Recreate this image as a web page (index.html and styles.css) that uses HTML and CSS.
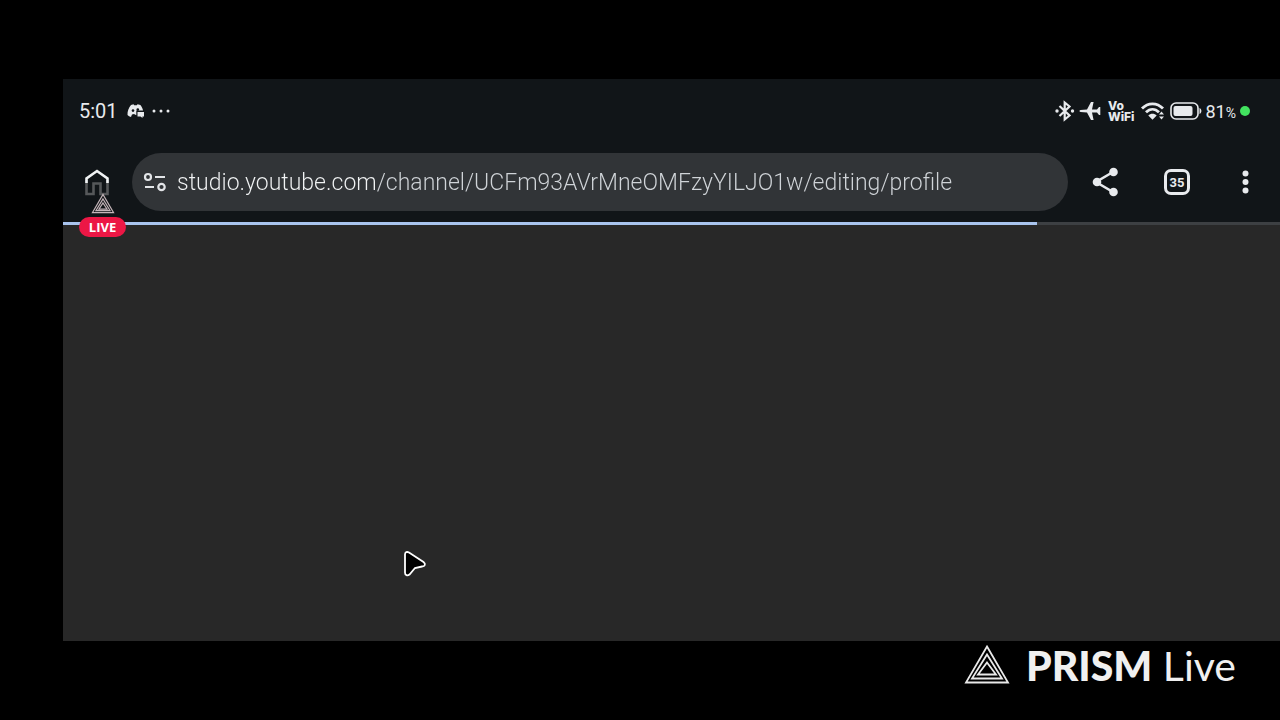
FILE: index.html
```
<!DOCTYPE html>
<html lang="en">
<head>
    <meta charset="UTF-8">
    <meta name="viewport" content="width=device-width, initial-scale=1.0">
    <title>PRISM Live</title>
    <link rel="stylesheet" href="styles.css">
</head>
<body>
    <main class="screen">
        <div class="status-bar">
            <span class="clock">5:01</span>
            <svg class="discord" width="18" height="16" viewBox="0 0 18 16" fill="#e8eaed">
                <path d="M4 2 6.500 1.200 7.200 2.200h2.600l.8-1 2.800.8c1.600 2 2.400 4 2.600 5.500H9.300v4.700L7 11l-2 .6L4 14C2.500 13.600 1.400 12.900.5 12 .3 8.500 1.600 4.600 4 2z"/>
                <path d="M10.500 9h6.500v4.500h-1.500V15l-2-1.500h-3z"/>
                <circle cx="6" cy="7.600" r="1.300" fill="#111518"/>
                <circle cx="10.800" cy="6.600" r="1.300" fill="#111518"/>
            </svg>
            <svg class="more" width="18" height="4" viewBox="0 0 18 4" fill="#e8eaed">
                <circle cx="2" cy="2" r="1.500"/><circle cx="9" cy="2" r="1.500"/><circle cx="16" cy="2" r="1.500"/>
            </svg>

            <div class="status-icons">
                <svg width="20" height="22" viewBox="0 0 20 22" fill="none" stroke="#e8eaed" stroke-width="2.200">
                    <path d="M4.500 6 14.500 15.500 9.700 19.500V2.500l4.800 4L4.500 16"/>
                    <g fill="#e8eaed" stroke="none"><circle cx="2" cy="11" r="1.700"/><circle cx="17.500" cy="11" r="1.700"/></g>
                </svg>
                <svg class="plane" width="22" height="20" viewBox="0 0 22 20" fill="#e8eaed">
                    <path d="M1.500 9 8 8.600 12 1h2.600L13 8.600h5L20 6h1.300v8H20l-2-2.600h-5l1.600 7.600H12L8 11.400 1.500 11c-1.500-.5-1.500-1.500 0-2z"/>
                </svg>
                <span class="vowifi">Vo<br>WiFi</span>
                <svg class="wifi" width="26" height="20" viewBox="0 0 26 20" fill="none" stroke="#e8eaed" stroke-width="2.800">
                    <path d="M3 7.500c6-6.300 15-6.300 21 0M7 11.300c4-4 9-4 13 0"/>
                    <path d="M9.300 14.500c2.200-2.500 6.200-2.500 8.400 0l-4.200 4.300zM20 13.500l2.500-3 2.500 3zM20 15.500h5l-2.500 3z" fill="#e8eaed" stroke="none"/>
                </svg>
                <svg class="battery" width="33" height="18" viewBox="0 0 33 18">
                    <rect x="2" y="1" width="27" height="16" rx="5" fill="none" stroke="#e8eaed" stroke-width="1.600"/>
                    <rect x="4.500" y="4" width="19" height="10" rx="2" fill="#e8eaed"/>
                    <path d="M30.500 6c2.500.8 2.500 5.200 0 6z" fill="#e8eaed"/>
                </svg>
                <span class="percent">81<small>%</small></span>
                <span class="recording"></span>
            </div>
        </div>

        <div class="toolbar">
            <button class="icon-button home" type="button" aria-label="Home">
                <svg width="26" height="28" viewBox="0 0 26 28" fill="none" stroke-width="2.600">
                    <path d="M2.500 12v14H9.500V15.500h7V26h7V12" stroke="#56585a"/>
                    <path d="M2.500 15V10.500L13 3l10.500 7.500V15" stroke="#f1f3f4"/>
                </svg>
            </button>
            <form class="address-bar">
                <button class="icon-button" type="button" aria-label="Site information">
                    <svg width="24" height="20" viewBox="0 0 24 20" fill="none" stroke="#e3e5e8" stroke-width="2.200">
                        <circle cx="5" cy="5" r="3"/><path d="M12 5h10M2 15h9"/><circle cx="18.500" cy="15" r="3.200"/>
                    </svg>
                </button>
                <input class="address" type="text" aria-label="Address" value="studio.youtube.com/channel/UCFm93AVrMneOMFzyYILJO1w/editing/profile">
            </form>
            <div class="actions">
                <button class="icon-button" type="button" aria-label="Share">
                    <svg width="28" height="30" viewBox="0 0 28 30" fill="#e8eaed">
                        <path d="M22 5 5 15l17 10" fill="none" stroke="#e8eaed" stroke-width="2.600"/>
                        <circle cx="22.500" cy="5" r="4.300"/><circle cx="6" cy="15" r="4.300"/><circle cx="22.500" cy="25" r="4.300"/>
                    </svg>
                </button>
                <button class="icon-button tabs" type="button" aria-label="Tabs">35</button>
                <button class="icon-button" type="button" aria-label="Menu">
                    <svg width="20" height="26" viewBox="0 0 20 26" fill="#e8eaed">
                        <circle cx="10.500" cy="4.500" r="3"/><circle cx="10.500" cy="13" r="3"/><circle cx="10.500" cy="21.500" r="3"/>
                    </svg>
                </button>
            </div>
        </div>
        <progress class="loading" value="80" max="100" aria-label="Loading"></progress>

        <div class="live">
            <svg width="24" height="21" viewBox="0 0 48 42" fill="none" stroke="#c5b5b9" stroke-width="2.500">
                <path d="M24 3 45 39H3zM24 12 38 35H10zM24 20 32 32H16z"/>
            </svg>
            <span class="live-badge">LIVE</span>
        </div>
        <svg class="pointer" width="24" height="28" viewBox="0 0 24 28">
            <path d="M2 4.500c0-2.500 2-3 4-2l14.500 9.500c2.500 2 1.500 4.500-1.500 4.500l-7 1.500-5.500 6.500C4.500 26 2 25.500 2 22.500z" fill="#000" stroke="#fff" stroke-width="1.800"/>
        </svg>
    </main>

    <footer class="watermark">
        <svg width="46" height="42" viewBox="0 0 46 42" fill="none" stroke="#e9e9e9" stroke-width="1.800">
            <path d="M23 2.500 44 38.500H2zM23 10.500 38 34.500H8zM23 18.500 32 30.500H14z"/>
        </svg>
        <span class="brand"><b>PRISM</b> Live</span>
    </footer>
</body>
</html>
```
FILE: styles.css
```
* {
    margin: 0;
    padding: 0;
    box-sizing: border-box;
}

body {
    display: flex;
    flex-direction: column;
    min-height: 100vh;
    padding: 79px 0 0 63px;
    background-color: #000;
    font-family: Roboto, sans-serif;
    color: #e8eaed;
    overflow-x: hidden;
}

svg {
    display: block;
    flex-shrink: 0;
}

.screen {
    position: relative;
    flex: 1;
    background-color: #282828;
}

.status-bar {
    display: flex;
    align-items: center;
    height: 64px;
    padding: 0 30px 0 16px;
    background-color: #111518;
}

.clock {
    font-size: 20px;
}

.discord {
    margin-left: 9px;
}

.more {
    margin-left: 7px;
}

.status-icons {
    display: flex;
    align-items: center;
    gap: 4px;
    margin-left: auto;
}

.plane {
    margin-right: 3px;
}

.vowifi {
    font-family: Inter, sans-serif;
    font-size: 12px;
    font-weight: 800;
    line-height: 11px;
}

.percent {
    font-size: 18px;
}

.percent small {
    font-size: 14px;
}

.recording {
    width: 10px;
    height: 10px;
    border-radius: 50%;
    background-color: #42e35f;
}

.toolbar {
    display: flex;
    align-items: center;
    height: 79px;
    padding: 0 25px 1px 21px;
    background-color: #111518;
}

.icon-button {
    display: flex;
    align-items: center;
    justify-content: center;
    border: none;
    background: none;
    color: #e8eaed;
    cursor: pointer;
}

.address-bar {
    display: flex;
    flex: 1;
    align-items: center;
    gap: 10px;
    height: 58px;
    margin: 0 23px 0 22px;
    padding: 0 24px 0 11px;
    border-radius: 29px;
    background-color: #313437;
}

.address {
    flex: 1;
    min-width: 0;
    padding-top: 2px;
    border: none;
    outline: none;
    font-family: Roboto, sans-serif;
    font-size: 23px;
    font-weight: 300;
    line-height: 32px;
    /* host is brighter than the rest of the url */
    background: linear-gradient(to right, #f1f3f4 200px, #d0d4d8 200px);
    -webkit-background-clip: text;
    background-clip: text;
    color: transparent;
}

.actions {
    display: flex;
    align-items: center;
    gap: 45px;
}

.tabs {
    width: 26px;
    height: 26px;
    border: 3px solid #e8eaed;
    border-radius: 7px;
    font-family: Roboto, sans-serif;
    font-size: 13px;
    font-weight: 700;
}

.loading {
    display: block;
    width: 100%;
    height: 3px;
    border: none;
    appearance: none;
    background-color: #3d4043;
}

.loading::-webkit-progress-bar {
    background-color: #3d4043;
}

.loading::-webkit-progress-value {
    background-color: #a9c4ee;
}

.live {
    position: absolute;
    top: 114px;
    left: 16px;
    display: flex;
    flex-direction: column;
    align-items: center;
    gap: 3px;
}

.live-badge {
    width: 47px;
    border-radius: 10px;
    background-color: #ec1745;
    font-family: "Open Sans", sans-serif;
    font-size: 13px;
    font-weight: 700;
    line-height: 20px;
    text-align: center;
    color: #fff;
}

.pointer {
    position: absolute;
    top: 471px;
    left: 340px;
}

.watermark {
    display: flex;
    align-items: flex-start;
    justify-content: flex-end;
    gap: 16px;
    height: 79px;
    padding: 3px 44px 0 0;
}

.brand {
    font-family: Lato, sans-serif;
    font-size: 41px;
    line-height: 44px;
    color: #f0f0f0;
}

.brand b {
    font-weight: 900;
}
```
